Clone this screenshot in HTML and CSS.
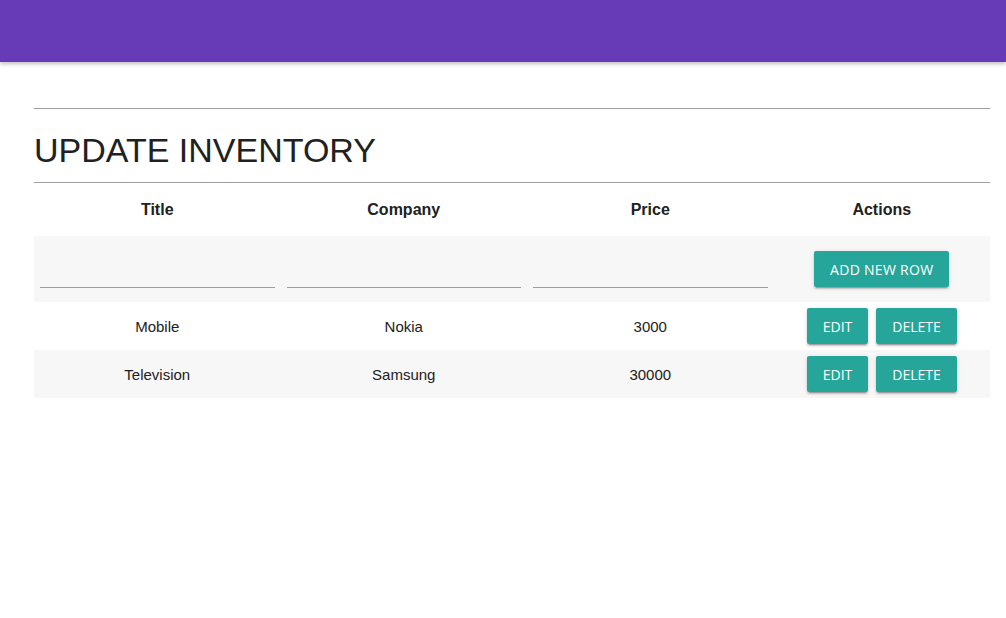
FILE: index.html
```html
<!DOCTYPE html>
<html>
<head>
<meta charset="utf-8">
<link rel="stylesheet" href="styles.css">
</head>
<body>
<header class="topbar"></header>
<main class="container">
  <hr class="rule">
  <h1 class="title">UPDATE INVENTORY</h1>
  <hr class="rule">
  <table class="grid">
    <colgroup>
      <col class="c-data"><col class="c-data"><col class="c-data"><col class="c-act">
    </colgroup>
    <thead>
      <tr><th>Title</th><th>Company</th><th>Price</th><th>Actions</th></tr>
    </thead>
    <tbody>
      <tr class="shade input-row">
        <td><input class="field" type="text"></td>
        <td><input class="field" type="text"></td>
        <td><input class="field" type="text"></td>
        <td><div class="add-wrap"><button class="btn">ADD NEW ROW</button></div></td>
      </tr>
      <tr>
        <td>Mobile</td><td>Nokia</td><td>3000</td>
        <td><div class="acts"><button class="btn btn-sm">EDIT</button><button class="btn btn-sm">DELETE</button></div></td>
      </tr>
      <tr class="shade">
        <td>Television</td><td>Samsung</td><td>30000</td>
        <td><div class="acts"><button class="btn btn-sm">EDIT</button><button class="btn btn-sm">DELETE</button></div></td>
      </tr>
    </tbody>
  </table>
</main>
</body>
</html>
```

FILE: styles.css
```css
html, body {
  margin: 0;
  padding: 0;
  background: #fff;
  font-family: "Liberation Sans", Arial, sans-serif;
  color: #212121;
}
.topbar {
  height: 62px;
  background: #673ab7;
  box-shadow: 0 2px 4px rgba(0,0,0,0.25);
}
.container {
  padding: 46px 16px 0 34px;
}
.rule {
  margin: 0;
  border: 0;
  border-top: 1px solid #9e9e9e;
}
.title {
  margin: 0;
  height: 73px;
  line-height: 82px;
  font-size: 34px;
  font-weight: 400;
  color: #212121;
}
.grid {
  width: 956px;
  border-collapse: collapse;
  table-layout: fixed;
}
.c-data { width: 246.5px; }
.c-act { width: 216.5px; }
.grid th {
  height: 53px;
  font-size: 16px;
  font-weight: 700;
  text-align: center;
  padding: 0;
}
.grid td {
  text-align: center;
  font-size: 15px;
  height: 48px;
  padding: 0 6px;
}
.shade { background: #f7f7f7; }
.input-row td {
  height: 66px;
  vertical-align: top;
}
.field {
  display: block;
  width: 100%;
  box-sizing: border-box;
  margin: 51px 0 0;
  height: 1px;
  padding: 0;
  border: 0;
  border-bottom: 1px solid #9e9e9e;
  background: transparent;
  outline: none;
}
.add-wrap {
  padding-top: 15px;
  display: flex;
  justify-content: center;
}
.btn {
  font-family: "Open Sans", sans-serif;
  font-size: 14px;
  letter-spacing: 0.3px;
  color: #fff;
  background: #26a69a;
  border: 0;
  border-radius: 2px;
  height: 36px;
  padding: 0 16px;
  box-shadow: 0 2px 2px rgba(0,0,0,0.14), 0 1px 5px rgba(0,0,0,0.12), 0 3px 1px -2px rgba(0,0,0,0.2);
  cursor: pointer;
}
.btn-sm {
  letter-spacing: 0;
}
.acts {
  display: flex;
  justify-content: center;
  gap: 8px;
}
```
